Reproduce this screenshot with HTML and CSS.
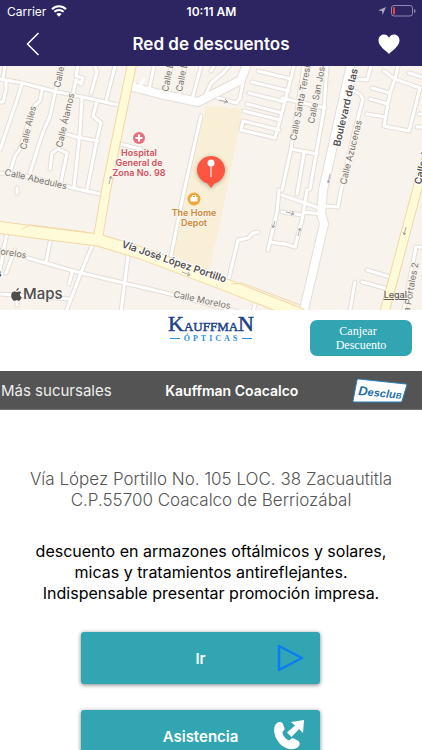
FILE: index.html
```html
<!DOCTYPE html>
<html lang="es">
<head>
    <meta charset="UTF-8">
    <meta name="viewport" content="width=device-width, initial-scale=1.0">
    <title>Red de descuentos</title>
    <link rel="stylesheet" href="styles.css">
</head>
<body>
    <header class="top">
        <div class="status">
            <div class="status-left">
                <span>Carrier</span>
                <svg width="16" height="12" viewBox="0 0 16 12">
                    <path d="M1 4.2a10 10 0 0 1 14 0M3.4 6.8a6.6 6.6 0 0 1 9.2 0" fill="none" stroke="#fff" stroke-width="2"/>
                    <path d="M8 11.8L5.4 9.1a3.8 3.8 0 0 1 5.2 0z" fill="#fff"/>
                </svg>
            </div>
            <span class="time">10:11 AM</span>
            <div class="status-right">
                <svg width="8" height="8" viewBox="0 0 8 8"><path d="M8 0L4.6 8 4 4.1 0 3.5z" fill="#aaa6c4"/></svg>
                <svg width="25" height="12" viewBox="0 0 25 12">
                    <rect x=".5" y=".5" width="21" height="10.5" rx="2.5" fill="none" stroke="#8d89ad"/>
                    <rect x="2" y="2" width="2" height="7.5" rx=".8" fill="#f0403c"/>
                    <path d="M23 4v4q1.6-.6 1.6-2T23 4z" fill="#8d89ad"/>
                </svg>
            </div>
        </div>
        <nav class="navbar">
            <button class="icon-btn" aria-label="Regresar">
                <svg width="14" height="24" viewBox="0 0 14 24"><path d="M12.500 1L1.500 12l11 11" fill="none" stroke="#fff" stroke-width="1.500"/></svg>
            </button>
            <h1>Red de descuentos</h1>
            <button class="icon-btn" aria-label="Favorito">
                <svg width="22" height="20" viewBox="0 0 22 20"><path d="M11 20C8.500 17 .5 12.500 .5 6.500.5 3 2.800.5 6 .5c2.200 0 4 1.200 5 3.300C12 1.700 13.800.5 16 .5c3.200 0 5.500 2.500 5.500 6 0 6-8 10.500-10.500 13.500z" fill="#fff"/></svg>
            </button>
        </nav>
    </header>

    <section class="map">
        <svg class="map-canvas" viewBox="0 66 422 244" preserveAspectRatio="xMidYMid slice">
            <defs>
                <!-- small streets -->
                <path id="streets" d="M0 79L22 83 53 91 87 98 118 105
                    M62 66L55 93 50 116 44 130 41 138 30 173
                    M22 84L15 106 7 129 0 150 M0 102h3l3-12v-8 M5 66L3 78
                    M42 90L40 101 35 105 30 118 20 149 15 156 10 172
                    M78 66L76 76 83 78 81 84 76 80 73 94
                    M95 66L97 72 91 93 M115 66L106 101
                    M82 98L80 132 74 187
                    M97 101L93 116 101 123 97 139 87 190
                    M67 134L76 137 98 141
                    M50 169L52 153 58 149 67 153 60 186
                    M0 173L30 177 73 188 100 194
                    M17 188v5 M120 144L141 149 M154 66L149 90 M171 66L166 94
                    M185 66L179 97 M201 66L193 96
                    M229 66L223 73 211 83 206 94 M211 71L214 66
                    M218 98L236 103 240 98 243 82
                    M201 116L184 191 171 256
                    M258 71L291 79 M252 82L289 91 M249 93L285 102 M247 104L282 113 M244 111L280 120
                    M294 66L280 120 275 138 241 130 243 121 279 130
                    M304 66L291 149 282 190 M327 66L324 109 310 189
                    M282 98L325 108 M291 149L317 154 M304 153L297 194
                    M350 89L360 94 363 99 354 133 340 195 338 207 325 206
                    M357 79L367 80 371 66
                    M384 71L395 79 390 93 384 126 409 131 420 88 395 79 398 66
                    M372 88L390 93 M370 99L388 104 M367 114L385 117
                    M409 73L422 77 M419 114h6 M417 127h6
                    M282 195L319 208 M282 212L302 215 M307 190L302 220 295 247 282 243
                    M304 212L320 214 M279 190L277 212 268 250 M271 242L283 244
                    M258 232L253 233 248 238 238 240 228 282
                    M367 270L390 277 M362 282L388 289 M355 282L350 310
                    M416 247L404 310 M419 247h6
                    M28 258L77 272 141 287 174 295 250 315
                    M7 232L0 270 M15 250L6 273 M50 242L46 262
                    M92 246L82 270 66 312 M128 256L121 312 M72 273L69 284
                    M0 294L70 299 M17 299v6 M255 304l-2 8"/>
                <path id="avenue" d="M133 87L160 94 198 102 241 80 247 64"/>
                <path id="boulevard" d="M351 64L323 190 321 213 324 224 303 314"/>
                <path id="yellow" d="M132 64L106 190 98 238 M426 160L417 190 384 314"/>
                <path id="via" d="M-4 227L50 234 98 240 141 253 221 283 300 314"/>
            </defs>
            <rect y="66" width="422" height="244" fill="#f8f3ec"/>
            <path d="M206 106L243 109 227 190 209 272 172 254 187 190z" fill="#f9efd6"/>
            <g class="road">
                <use href="#streets" stroke="#e3ded9" stroke-width="5"/>
                <use href="#avenue" stroke="#e3ded9" stroke-width="10"/>
                <use href="#boulevard" stroke="#e3ded9" stroke-width="10"/>
                <use href="#streets" stroke="#fff" stroke-width="3"/>
                <use href="#avenue" stroke="#fff" stroke-width="8"/>
                <use href="#boulevard" stroke="#fff" stroke-width="8"/>
                <path d="M133 82l4 5 M137 89l7-9" stroke="#fff" stroke-width="3"/>
                <use href="#yellow" stroke="#f3d8a4" stroke-width="10"/>
                <use href="#via" stroke="#f3d8a4" stroke-width="13"/>
                <use href="#yellow" stroke="#fffbd9" stroke-width="8"/>
                <use href="#via" stroke="#fffbd9" stroke-width="11"/>
                <path d="M22 229l8-4 56 7 M232 284l10-1 58 22" stroke="#f3d8a4" stroke-width="1"/>
            </g>
            <!-- one way arrows -->
            <g class="arrow">
                <path d="M109 184l2-8m-2 2l2-2 1 3"/>
                <path d="M219 100l9 2m-3-3l3 3-4 1"/>
                <path d="M328 183l2-9m-2 6v3l2-2"/>
                <path d="M404 235l2-8m-3 5l1 3 2-2"/>
                <path d="M182 272l8 3m-2-3l2 3-3 1"/>
                <path d="M298 236l2-8m-2 2l2-2 1 3"/>
                <path d="M286 212l8 2m-2-3l2 3-3 1"/>
                <path d="M273 228l2-7m-3 4l1 3 2-2"/>
            </g>
            <g class="street-name">
                <text transform="translate(60 88) rotate(-78)">Calle E</text>
                <text transform="translate(26 150) rotate(-77)">Calle Ailes</text>
                <text transform="translate(62 148) rotate(-77)">Calle Álamos</text>
                <text transform="translate(4 175) rotate(13)">Calle Abedules</text>
                <text transform="translate(168 92) rotate(-79)">Calle Eb</text>
                <text transform="translate(182 92) rotate(-79)">Calle En</text>
                <text transform="translate(296 141) rotate(-79)">Calle Santa Teresita</text>
                <text transform="translate(314 124) rotate(-79)">Calle San José</text>
                <text transform="translate(346 185) rotate(-76)">Calle Azucenas</text>
                <text transform="translate(-8 253) rotate(9)">Morelos</text>
                <text transform="translate(173 297) rotate(12)">Calle Morelos</text>
                <text transform="translate(409 316) rotate(-80)">ra Portales 2</text>
            </g>
            <g class="avenue-name">
                <text transform="translate(340 147) rotate(-77)">Boulevard de las Flores</text>
                <text transform="translate(121 247) rotate(19)">Vía José López Portillo</text>
                <text transform="translate(421 185) rotate(-77)">Calle J</text>
                <text transform="translate(-4 277)">s</text>
            </g>
            <circle cx="139" cy="138" r="6" fill="#e2727f"/>
            <path d="M139 134.500v7M135.500 138h7" stroke="#fff" stroke-width="2"/>
            <g class="place hospital">
                <text x="139" y="156">Hospital</text>
                <text x="139" y="166">General de</text>
                <text x="139" y="176">Zona No. 98</text>
            </g>
            <circle cx="194" cy="199" r="6.500" fill="#eda73b"/>
            <path d="M190.500 197h7v4.500h-7z" fill="#fff"/>
            <path d="M192.500 197v-1.500h3v1.500" fill="none" stroke="#fff"/>
            <g class="place shop">
                <text x="194" y="216">The Home</text>
                <text x="194" y="226">Depot</text>
            </g>
            <path class="pin" d="M211 188l-3.500-4.500a14 14 0 1 1 7 0z"/>
            <path d="M211 164v13" stroke="#fbd5cf" stroke-width="1.500"/>
            <circle cx="211" cy="163" r="3.500" fill="#fff"/>
        </svg>
        <div class="map-brand">
            <svg width="11" height="13" viewBox="0 0 11 13"><path d="M7.800 0c.1 1.500-1.100 2.800-2.500 2.900C5.200 1.500 6.400.2 7.800 0zM10.300 4.300C8.200 5.600 8.500 8.200 10.800 9.100 10.200 11 9.100 12.700 8 12.700c-.9 0-1.200-.5-2.200-.5s-1.400.5-2.200.5C1.800 12.700.2 9.700.2 7.400c0-2.500 1.600-3.900 3.200-3.900 1 0 1.800.6 2.400.6s1.500-.7 2.700-.7c.7 0 1.400.3 1.800.9z" fill="#4d4d4d"/></svg>
            <span>Maps</span>
        </div>
        <a class="legal" href="#">Legal</a>
    </section>

    <section class="brand">
        <svg class="brand-logo" width="88" height="34" viewBox="0 0 88 34" role="img" aria-label="Kauffman Ópticas">
            <text class="kauffman" x="44" y="21"><tspan class="cap">K</tspan>AUFFMA<tspan class="cap">N</tspan></text>
            <path d="M3 28.500h10M75 28.500h10" stroke="#2e8fd0"/>
            <text class="opticas" x="45" y="31">ÓPTICAS</text>
        </svg>
        <button class="redeem">Canjear &nbsp;<br>Descuento</button>
    </section>

    <div class="branch-bar">
        <a href="#">Más sucursales</a>
        <h2>Kauffman Coacalco</h2>
        <svg width="56" height="25" viewBox="0 0 56 25" role="img" aria-label="Desclub">
            <path d="M6.500 1L54 6q1 .2.8 1.200L50 23q-.3 1-1.300 1H2q-1.200 0-1-1.200L5 2q.3-1 1.500-1z" fill="#fff" stroke="#2b7fb8"/>
            <text class="desclub" transform="translate(6 17) rotate(5)">D<tspan class="small">esclu</tspan><tspan class="tiny">B</tspan></text>
        </svg>
    </div>

    <main class="details">
        <p class="address">Vía López Portillo No. 105 LOC. 38 Zacuautitla C.P.55700 Coacalco de Berriozábal</p>
        <p class="promo">descuento en armazones oftálmicos y solares, micas y tratamientos antireflejantes. Indispensable presentar promoción impresa.</p>
        <div class="actions">
            <button class="action">
                <span>Ir</span>
                <svg width="28" height="28" viewBox="0 0 28 28"><path d="M2 2v24l23-12z" fill="none" stroke="#0a7cf5" stroke-width="2.500" stroke-linejoin="round"/></svg>
            </button>
            <button class="action">
                <span>Asistencia</span>
                <svg width="32" height="32" viewBox="0 0 32 32">
                    <path d="M4 3c2-1.500 5-1 5.800.8l1.600 4c.6 1.700-.2 2.700-1.800 3.900-.8 2.800 3.800 8.500 7 8.600 1.200-1.500 2.600-2.500 4.200-1.700l4.200 2.200c2 1 2.200 3.800.6 5.600C20 32 9 29 3.500 19 0 12 .5 5.500 4 3z" fill="#fff"/>
                    <path d="M18 2l13-2-1 13-4-4-7.500 8-4.500-4.500 8-7z" fill="#fff"/>
                </svg>
            </button>
        </div>
    </main>
</body>
</html>
```
FILE: styles.css
```css
* {
    box-sizing: border-box;
}
body {
    margin: 0;
    height: 100vh;
    overflow: hidden;
    background-color: #fff;
    font-family: Inter, "Liberation Sans", sans-serif;
}
h1, h2, p {
    margin: 0;
}
button {
    border: none;
    padding: 0;
    font-family: inherit;
    color: #fff;
    cursor: pointer;
}
svg {
    display: block;
}

/* header */
.top {
    background-color: #2c2561;
    color: #fff;
}
.status {
    display: grid;
    grid-template-columns: 1fr auto 1fr;
    align-items: center;
    height: 22px;
    padding: 0 6px 0 7px;
    font-size: 12px;
}
.status-left, .status-right {
    display: flex;
    align-items: center;
    gap: 5px;
}
.status-right {
    justify-content: flex-end;
}
.time {
    font-weight: 600;
}
.navbar {
    display: flex;
    align-items: center;
    justify-content: space-between;
    height: 44px;
    padding: 0 22px;
}
.navbar h1 {
    font-size: 17px;
    font-weight: 600;
}
.icon-btn {
    display: flex;
    align-items: center;
    justify-content: center;
    width: 22px;
    height: 44px;
    background: none;
}

/* map */
.map {
    position: relative;
    height: 244px;
    overflow: hidden;
    background-color: #f8f3ec;
}
.map-canvas {
    width: 100%;
    height: 100%;
}
.road {
    fill: none;
    stroke-linejoin: round;
    stroke-linecap: round;
}
.arrow {
    fill: none;
    stroke: #aaa;
    stroke-width: 1;
}
.street-name, .avenue-name, .place {
    paint-order: stroke;
    stroke: #f8f3ec;
    stroke-width: 2px;
}
.street-name {
    font-size: 9px;
    fill: #77736f;
}
.avenue-name {
    font-size: 10px;
    font-weight: 600;
    fill: #55514e;
    stroke: #fff;
}
.place {
    font-size: 9px;
    font-weight: 600;
    text-anchor: middle;
}
.hospital {
    fill: #cf5363;
}
.shop {
    fill: #d08a35;
}
.pin {
    fill: #fc5643;
    filter: drop-shadow(0 1px 2px rgba(0, 0, 0, 0.3));
}
.map-brand {
    position: absolute;
    left: 11px;
    bottom: 7px;
    display: flex;
    align-items: center;
    gap: 1px;
    color: #4d4d4d;
    font-size: 15px;
    line-height: 18px;
    font-weight: 500;
}
.legal {
    position: absolute;
    right: 15px;
    bottom: 9px;
    font-size: 9px;
    line-height: 12px;
    font-weight: 500;
    color: #5f5c59;
}

/* brand + redeem */
.brand {
    display: grid;
    grid-template-columns: 1fr auto 1fr;
    height: 61px;
}
.brand-logo {
    grid-column: 2;
}
.kauffman {
    font-family: "Liberation Serif", serif;
    font-size: 13px;
    text-anchor: middle;
    fill: #1c4289;
    stroke: #1c4289;
    stroke-width: 0.5px;
}
.kauffman .cap {
    font-size: 22px;
}
.opticas {
    font-family: "Liberation Serif", serif;
    font-size: 8px;
    font-weight: bold;
    letter-spacing: 3px;
    text-anchor: middle;
    fill: #2e8fd0;
}
.redeem {
    justify-self: end;
    width: 102px;
    height: 36px;
    margin: 10px 10px 0 0;
    border-radius: 7px;
    background-color: #31a5b2;
    font-family: "Liberation Serif", serif;
    font-size: 12px;
    line-height: 14px;
}

/* branch bar */
.branch-bar {
    display: flex;
    align-items: center;
    justify-content: space-between;
    height: 39px;
    padding: 0 14px 0 1px;
    background-color: #545454;
    border-bottom: 1px solid #777;
}
.branch-bar a {
    color: #eee;
    font-size: 15px;
    text-decoration: none;
}
.branch-bar h2 {
    color: #fff;
    font-size: 14px;
    font-weight: 600;
}
.desclub {
    font-family: "Liberation Sans", sans-serif;
    font-size: 13px;
    font-style: italic;
    font-weight: bold;
    fill: #1f6ea8;
}
.desclub .small {
    font-size: 11px;
}
.desclub .tiny {
    font-size: 8px;
}

/* details */
.details {
    padding-top: 59px;
    text-align: center;
    font-size: 16px;
    line-height: 21px;
}
.address {
    padding: 0 24px;
    color: #555;
    font-size: 17px;
    font-weight: 300;
}
.promo {
    margin-top: 30px;
    padding: 0 24px;
    color: #000;
}
.actions {
    display: flex;
    flex-direction: column;
    gap: 26px;
    margin: 28px 102px 0 81px;
}
.action {
    display: grid;
    grid-template-columns: 1fr auto 1fr;
    align-items: center;
    height: 52px;
    padding: 0 15px;
    border-radius: 3px;
    background-color: #31a5b2;
    box-shadow: 0 1px 4px rgba(0, 0, 0, 0.5);
    font-size: 15px;
    font-weight: 600;
}
.action span {
    grid-column: 2;
}
.action svg {
    justify-self: end;
}
```
